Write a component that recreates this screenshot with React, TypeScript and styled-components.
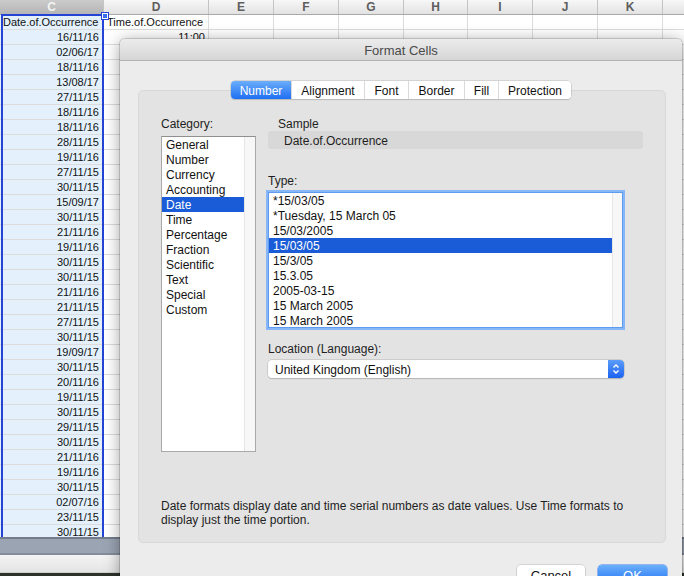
import React from 'react';
import styled, { createGlobalStyle } from 'styled-components';

const Global = createGlobalStyle`
  html, body { margin: 0; padding: 0; width: 684px; height: 576px; overflow: hidden; background: #fff; }
  #root { width: 684px; height: 576px; }
  * { box-sizing: border-box; }
`;

const Screen = styled.div`
  position: relative;
  width: 684px;
  height: 576px;
  overflow: hidden;
  display: flex;
  flex-direction: column;
  font-family: "Liberation Sans", Arial, sans-serif;
`;

/* ---------- spreadsheet ---------- */
const Sheet = styled.div`
  position: relative;
  flex: none;
  height: 537px;
  overflow: hidden;
  background: #fff;
`;

const HeaderRow = styled.div`
  display: flex;
  height: 15px;
  border-bottom: 1px solid #a8a8a8;
  background: linear-gradient(#f7f7f7, #e2e2e2);
`;

const HeaderCell = styled.div<{ $w: number; $sel?: boolean }>`
  flex: none;
  width: ${p => p.$w}px;
  border-right: 1px solid #c4c4c4;
  display: flex;
  align-items: center;
  justify-content: center;
  font-size: 12px;
  font-weight: bold;
  color: ${p => (p.$sel ? '#f3f3f3' : '#5e5e5e')};
  background: ${p => (p.$sel ? 'linear-gradient(#cbcbcb, #b5b5b5)' : 'transparent')};
`;

const Row = styled.div`
  display: flex;
  height: 15px;
`;

const Cell = styled.div<{ $w: number; $sel?: boolean; $right?: boolean }>`
  flex: none;
  width: ${p => p.$w}px;
  border-right: 1px solid #dcdcdc;
  border-bottom: 1px solid #dcdcdc;
  background: ${p => (p.$sel ? '#e4f1fd' : '#fff')};
  font-size: 11px;
  line-height: 14px;
  color: #111;
  white-space: nowrap;
  overflow: hidden;
  text-align: ${p => (p.$right ? 'right' : 'left')};
  padding: ${p => (p.$sel ? '0 4px 0 3px' : '0 3px')};
`;

const SelectionFrame = styled.div`
  position: absolute;
  left: 1px;
  top: 14px;
  width: 103px;
  height: 540px;
  border: 2px solid #2444d6;
  pointer-events: none;
`;

const FillHandle = styled.div`
  position: absolute;
  left: 102px;
  top: 13px;
  width: 6px;
  height: 6px;
  background: #3a6ee8;
  border: 1px solid #fff;
  outline: 1px solid #2444d6;
`;

const SheetTabs = styled.div`
  flex: none;
  height: 18px;
  border-top: 2px solid #737c8b;
  border-bottom: 2px solid #848d9b;
  background: #9aa4b3;
`;

const StatusBar = styled.div`
  flex: none;
  height: 18px;
  background: linear-gradient(#f4f4f4, #e4e4e4);
  border-bottom: 1px solid #cfcfcf;
`;

const Desktop = styled.div`
  flex: 1;
  background: #2d322b;
`;

/* ---------- dialog ---------- */
const Dialog = styled.div`
  position: absolute;
  left: 120px;
  top: 39px;
  width: 562px;
  height: 560px;
  border-radius: 5px 5px 0 0;
  background: #ececec;
  box-shadow: 0 0 0 1px rgba(0, 0, 0, 0.14), 0 2px 16px rgba(0, 0, 0, 0.38);
  display: flex;
  flex-direction: column;
  overflow: hidden;
`;

const TitleBar = styled.div`
  flex: none;
  height: 22px;
  padding-top: 2px;
  display: flex;
  align-items: center;
  justify-content: center;
  background: linear-gradient(#ececec, #d6d6d6);
  border-bottom: 1px solid #b3b3b3;
  font-size: 13px;
  color: #4a4a4a;
`;

const Body = styled.div`
  flex: 1;
  display: flex;
  flex-direction: column;
  padding: 20px 16px 0 18px;
`;

const TabsRow = styled.div`
  display: flex;
  justify-content: center;
  margin-bottom: -9px;
  position: relative;
  z-index: 1;
  padding-right: 2px;
`;

const TabGroup = styled.div`
  display: flex;
  height: 18px;
  background: #fff;
  border-radius: 4px;
  box-shadow: 0 0 0 0.5px #b9b9b9, 0 1px 1px rgba(0, 0, 0, 0.18);
  overflow: hidden;
`;

const Tab = styled.div<{ $w: number; $active?: boolean }>`
  width: ${p => p.$w}px;
  display: flex;
  align-items: center;
  justify-content: center;
  padding-top: 1px;
  font-size: 12px;
  color: ${p => (p.$active ? '#fff' : '#111')};
  background: ${p => (p.$active ? 'linear-gradient(#6aaefb, #1f6ff2)' : '#fff')};
  & + & {
    border-left: 1px solid #dadada;
  }
`;

const Panel = styled.div`
  flex: none;
  height: 453px;
  background: #e3e3e3;
  border: 1px solid #d8d8d8;
  border-radius: 5px;
  padding: 25px 0 15px 22px;
  display: flex;
  flex-direction: column;
`;

const Columns = styled.div`
  display: flex;
  gap: 11px;
`;

const LeftCol = styled.div`
  width: 95px;
  display: flex;
  flex-direction: column;
`;

const RightCol = styled.div`
  width: 376px;
  display: flex;
  flex-direction: column;
`;

const Label = styled.div<{ $indent?: number; $gap?: number }>`
  height: 15px;
  padding-top: 1px;
  line-height: 15px;
  font-size: 12px;
  color: #1e1e1e;
  padding-left: ${p => p.$indent ?? 0}px;
  margin-top: ${p => p.$gap ?? 0}px;
`;

const CategoryList = styled.div`
  margin-top: 5px;
  height: 316px;
  background: #fff;
  border: 1px solid #a9a9a9;
  border-top-color: #8f8f8f;
  display: flex;
`;

const Items = styled.div`
  flex: 1;
  display: flex;
  flex-direction: column;
`;

const Item = styled.div<{ $sel?: boolean }>`
  flex: none;
  height: 15px;
  padding: 1px 0 0 4px;
  line-height: 15px;
  font-size: 12px;
  white-space: nowrap;
  color: ${p => (p.$sel ? '#fff' : '#111')};
  background: ${p => (p.$sel ? '#1a5cd7' : 'transparent')};
`;

const ScrollTrack = styled.div<{ $w: number }>`
  flex: none;
  width: ${p => p.$w}px;
  background: #f7f7f7;
  border-left: 1px solid #e6e6e6;
`;

const SampleBox = styled.div`
  margin-left: 1px;
  height: 18px;
  border-radius: 3px;
  background: #d8d8d8;
  font-size: 12px;
  line-height: 18px;
  padding: 1px 0 0 16px;
  color: #1e1e1e;
`;

const TypeList = styled.div`
  margin: 5px 0 0 2px;
  width: 353px;
  height: 134px;
  background: #fff;
  box-shadow: 0 0 0 1px #5f9bf0, 0 0 0 3px #86b6f6;
  display: flex;
  overflow: hidden;
`;

const Select = styled.div`
  margin: 4px 0 0 1px;
  width: 356px;
  height: 18px;
  display: flex;
  border-radius: 4px;
  background: #fff;
  box-shadow: 0 0 0 0.5px #b5b5b5, 0 1px 1px rgba(0, 0, 0, 0.2);
  overflow: hidden;
`;

const SelectText = styled.div`
  flex: 1;
  font-size: 12px;
  line-height: 18px;
  padding: 1px 0 0 7px;
  color: #111;
`;

const Stepper = styled.div`
  flex: none;
  width: 16px;
  display: flex;
  align-items: center;
  justify-content: center;
  background: linear-gradient(#5b9dfa, #1b62f0);
`;

const Description = styled.div`
  margin-top: auto;
  font-size: 12px;
  line-height: 14px;
  padding-top: 1px;
  color: #1e1e1e;
`;

const Footer = styled.div`
  display: flex;
  justify-content: flex-end;
  gap: 13px;
  margin: 22px -1px 0 0;
`;

const Button = styled.div<{ $w: number; $primary?: boolean }>`
  width: ${p => p.$w}px;
  height: 21px;
  border-radius: 4px;
  display: flex;
  align-items: center;
  justify-content: center;
  font-size: 13px;
  color: ${p => (p.$primary ? '#fff' : '#111')};
  background: ${p => (p.$primary ? 'linear-gradient(#6ab0fb, #1c6cf2)' : '#fff')};
  box-shadow: ${p =>
    p.$primary
      ? '0 0 0 0.5px #3c7ced, 0 1px 1px rgba(0,0,0,0.2)'
      : '0 0 0 0.5px #b9b9b9, 0 1px 1px rgba(0,0,0,0.2)'};
`;

const colWidths = [104, 105, 65, 65, 65, 64, 65, 65, 65, 65];
const colNames = ['C', 'D', 'E', 'F', 'G', 'H', 'I', 'J', 'K', ''];

const dates = [
  '16/11/16', '02/06/17', '18/11/16', '13/08/17', '27/11/15', '18/11/16', '18/11/16', '28/11/15',
  '19/11/16', '27/11/15', '30/11/15', '15/09/17', '30/11/15', '21/11/16', '19/11/16', '30/11/15',
  '30/11/15', '21/11/16', '21/11/15', '27/11/15', '30/11/15', '19/09/17', '30/11/15', '20/11/16',
  '19/11/15', '30/11/15', '29/11/15', '30/11/15', '21/11/16', '19/11/16', '30/11/15', '02/07/16',
  '23/11/15', '30/11/15',
];

const categories = ['General', 'Number', 'Currency', 'Accounting', 'Date', 'Time', 'Percentage', 'Fraction', 'Scientific', 'Text', 'Special', 'Custom'];
const types = ['*15/03/05', '*Tuesday, 15 March 05', '15/03/2005', '15/03/05', '15/3/05', '15.3.05', '2005-03-15', '15 March 2005', '15 March 2005'];
const tabs: [string, number][] = [['Number', 60], ['Alignment', 73], ['Font', 44], ['Border', 56], ['Fill', 34], ['Protection', 73]];

const rows: { c: string; d: string; cRight: boolean; dRight: boolean }[] = [
  { c: 'Date.of.Occurrence', d: 'Time.of.Occurrence', cRight: false, dRight: false },
  ...dates.map((d, i) => ({ c: d, d: i === 0 ? '11:00' : '', cRight: true, dRight: true })),
];

export default function App() {
  return (
    <Screen>
      <Global />
      <Sheet>
        <HeaderRow>
          {colWidths.map((w, i) => (
            <HeaderCell key={i} $w={w} $sel={i === 0}>{colNames[i]}</HeaderCell>
          ))}
        </HeaderRow>
        {rows.map((r, ri) => (
          <Row key={ri}>
            {colWidths.map((w, ci) => (
              <Cell
                key={ci}
                $w={w}
                $sel={ci === 0}
                $right={ci === 0 ? r.cRight : r.dRight}
              >
                {ci === 0 ? r.c : ci === 1 ? r.d : ''}
              </Cell>
            ))}
          </Row>
        ))}
        <SelectionFrame />
        <FillHandle />
      </Sheet>
      <SheetTabs />
      <StatusBar />
      <Desktop />

      <Dialog>
        <TitleBar>Format Cells</TitleBar>
        <Body>
          <TabsRow>
            <TabGroup>
              {tabs.map(([t, w], i) => (
                <Tab key={t} $w={w} $active={i === 0}>{t}</Tab>
              ))}
            </TabGroup>
          </TabsRow>
          <Panel>
            <Columns>
              <LeftCol>
                <Label>Category:</Label>
                <CategoryList>
                  <Items>
                    {categories.map(c => (
                      <Item key={c} $sel={c === 'Date'}>{c}</Item>
                    ))}
                  </Items>
                  <ScrollTrack $w={11} />
                </CategoryList>
              </LeftCol>
              <RightCol>
                <Label $indent={11}>Sample</Label>
                <SampleBox>Date.of.Occurrence</SampleBox>
                <Label $indent={1} $gap={24}>Type:</Label>
                <TypeList>
                  <Items>
                    {types.map((t, i) => (
                      <Item key={i} $sel={i === 3}>{t}</Item>
                    ))}
                  </Items>
                  <ScrollTrack $w={10} />
                </TypeList>
                <Label $indent={1} $gap={14}>Location (Language):</Label>
                <Select>
                  <SelectText>United Kingdom (English)</SelectText>
                  <Stepper>
                    <svg width="8" height="12" viewBox="0 0 8 12">
                      <path d="M1.5 4.5 L4 2 L6.5 4.5 M1.5 7.5 L4 10 L6.5 7.5" fill="none" stroke="#fff" strokeWidth="1.4" />
                    </svg>
                  </Stepper>
                </Select>
              </RightCol>
            </Columns>
            <Description>
              Date formats display date and time serial numbers as date values. Use Time formats to
              <br />
              display just the time portion.
            </Description>
          </Panel>
          <Footer>
            <Button $w={68}>Cancel</Button>
            <Button $w={69} $primary>OK</Button>
          </Footer>
        </Body>
      </Dialog>
    </Screen>
  );
}
